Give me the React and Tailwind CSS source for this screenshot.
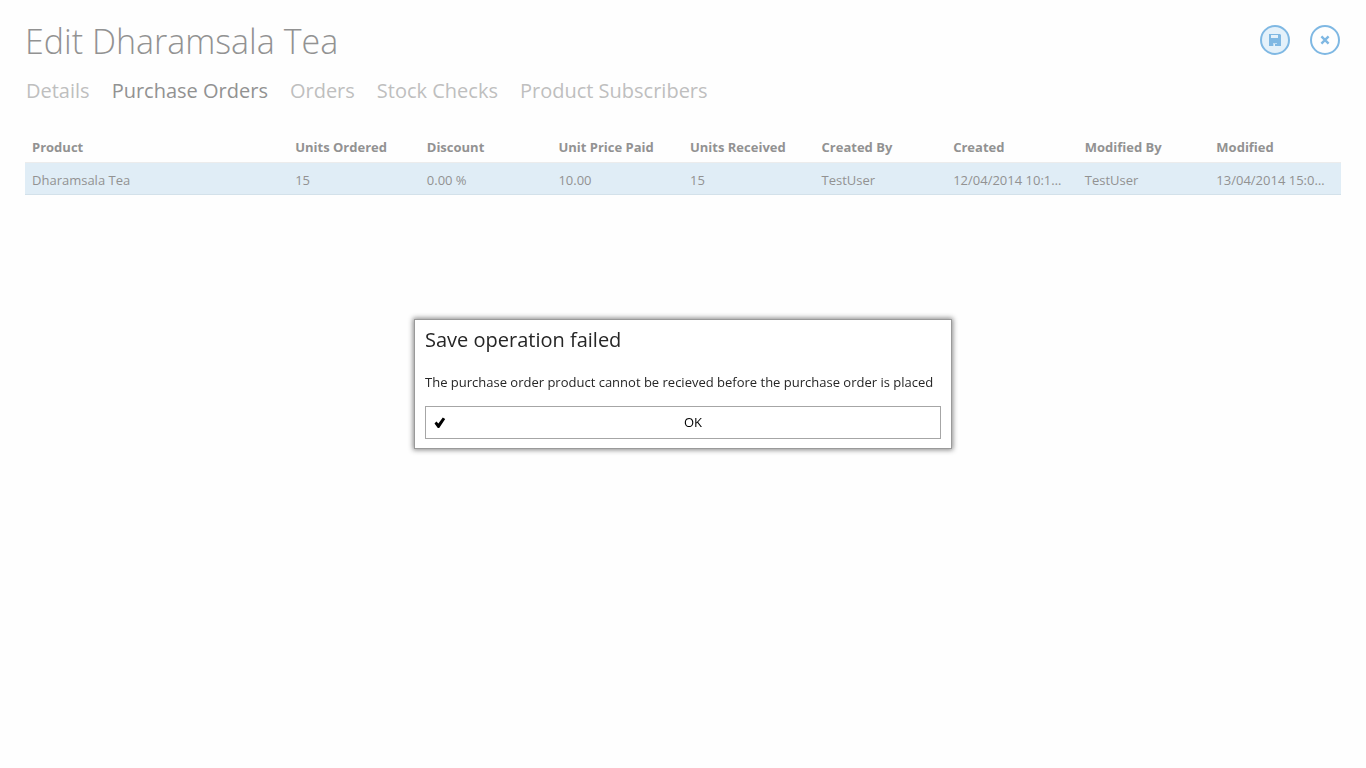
import React from 'react';

const tabs = ['Details', 'Purchase Orders', 'Orders', 'Stock Checks', 'Product Subscribers'];

const columns = [
  'Product',
  'Units Ordered',
  'Discount',
  'Unit Price Paid',
  'Units Received',
  'Created By',
  'Created',
  'Modified By',
  'Modified',
];

const rows = [
  ['Dharamsala Tea', '15', '0.00 %', '10.00', '15', 'TestUser', '12/04/2014 10:15:32', 'TestUser', '13/04/2014 15:02:47'],
];

function SaveIcon() {
  return (
    <svg width="12" height="12" viewBox="0 0 12 12" aria-hidden="true">
      <path
        fill="currentColor"
        fillRule="evenodd"
        d="M0 0H11L12 1V12H8V9H4V12H0ZM2 1V4H9V1Z"
      />
      <path fill="currentColor" d="M4 9H8V12H6V10H5V12H4Z" opacity="0.35" />
      <path fill="currentColor" d="M6 10H8V12H6Z" />
    </svg>
  );
}

function CloseIcon() {
  return (
    <svg width="10" height="10" viewBox="0 0 10 10" aria-hidden="true">
      <path d="M1.4 1.4L8.6 8.6M8.6 1.4L1.4 8.6" stroke="currentColor" strokeWidth="2.4" />
    </svg>
  );
}

function CheckIcon() {
  return (
    <svg width="12" height="12" viewBox="0 0 12 12" aria-hidden="true">
      <path d="M0.5 6.4L2.4 4.6L4.4 6.4L8.8 0.6L11.2 2L5.2 11H3.8Z" fill="currentColor" />
    </svg>
  );
}

function Header() {
  return (
    <header className="flex items-start justify-between">
      <h1 className="text-[34px] leading-[48px] font-light text-[#929292]">Edit Dharamsala Tea</h1>
      <div className="flex gap-5 pt-2 pr-px text-[#7fb8e3]">
        <button
          type="button"
          aria-label="Save"
          className="flex size-[30px] items-center justify-center rounded-full border-2 border-[#7fb8e3] bg-[#e4f1fa]"
        >
          <SaveIcon />
        </button>
        <button
          type="button"
          aria-label="Close"
          className="flex size-[30px] items-center justify-center rounded-full border-2 border-[#7fb8e3]"
        >
          <CloseIcon />
        </button>
      </div>
    </header>
  );
}

function Tabs() {
  return (
    <nav className="mt-[10px] flex gap-[22px] pl-px text-xl leading-8">
      {tabs.map((tab) => (
        <a
          key={tab}
          href="#"
          aria-current={tab === 'Purchase Orders' ? 'page' : undefined}
          className={tab === 'Purchase Orders' ? 'text-[#929292]' : 'text-[#bfbfbf]'}
        >
          {tab}
        </a>
      ))}
    </nav>
  );
}

function OrdersTable() {
  return (
    <table className="mt-6 w-full table-fixed border-collapse text-left text-[13px] leading-[18px] text-[#929292]">
      <colgroup>
        <col className="w-1/5" />
        {columns.slice(1).map((c) => (
          <col key={c} className="w-1/10" />
        ))}
      </colgroup>
      <thead>
        <tr className="h-[31px] border-b border-[#ececec]">
          {columns.map((c) => (
            <th key={c} scope="col" className="truncate px-[7px] pt-px font-bold">
              {c}
            </th>
          ))}
        </tr>
      </thead>
      <tbody>
        {rows.map((row, i) => (
          <tr key={i} className="h-8 border-b border-[#d3e1ea] bg-[#e0edf6]">
            {row.map((cell, j) => (
              <td key={j} className="truncate pt-[3px] pr-3 pl-[7px]">
                {cell}
              </td>
            ))}
          </tr>
        ))}
      </tbody>
    </table>
  );
}

function ErrorDialog() {
  return (
    <div className="fixed inset-0 flex items-center justify-center">
      <div
        role="alertdialog"
        aria-labelledby="dialog-title"
        aria-describedby="dialog-message"
        className="min-w-[538px] border border-[#9a9a9a] bg-white px-[10px] pt-1 pb-[9px] text-[#262626] shadow-[0_0_5px_1px_#888888]"
      >
        <h2 id="dialog-title" className="text-xl leading-8">
          Save operation failed
        </h2>
        <p id="dialog-message" className="mt-4 text-[13px] leading-5">
          The purchase order product cannot be recieved before the purchase order is placed
        </p>
        <button
          type="button"
          className="mt-[14px] flex h-[33px] w-full items-center border border-[#a6a6a6] px-2 text-[13px] text-black"
        >
          <CheckIcon />
          <span className="flex-1 pl-2 text-center">OK</span>
        </button>
      </div>
    </div>
  );
}

export default function App() {
  return (
    <div className="min-h-screen bg-[#fefefe] font-['Open_Sans','Noto_Sans',sans-serif]">
      <main className="px-[25px] pt-[17px]">
        <Header />
        <Tabs />
        <OrdersTable />
      </main>
      <ErrorDialog />
    </div>
  );
}
